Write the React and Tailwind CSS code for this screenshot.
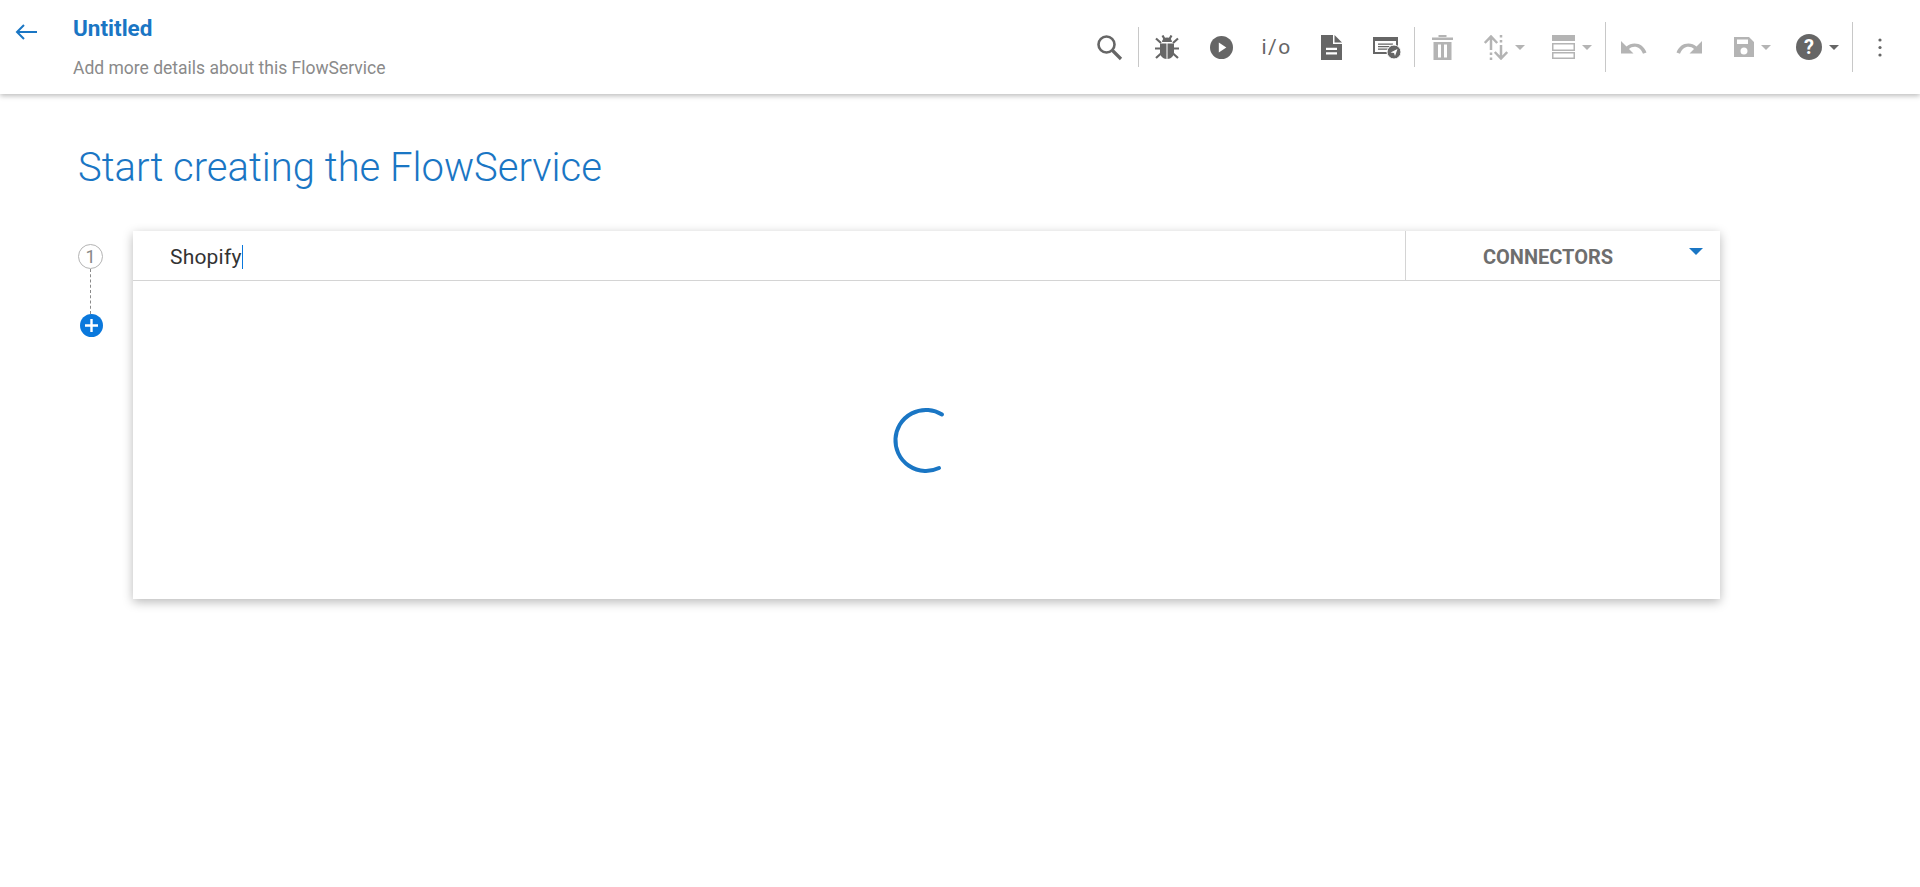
import React from "react";

const Caret = ({ color = "#b4b4b4" }) => (
  <svg width="10" height="5" viewBox="0 0 10 5" className="ml-[7px] shrink-0"><path d="M0 0h10L5 5z" fill={color} /></svg>
);
const Sep = ({ tall }) => (
  <div className={tall ? "w-px h-[50px] bg-[#c8c8c8] shrink-0" : "w-px h-10 bg-[#c8c8c8] shrink-0"} />
);
const Item = ({ className = "w-[55px]", children }) => (
  <div className={`${className} h-full flex items-center justify-center shrink-0`}>{children}</div>
);

const D = "#666666";
const L = "#b4b4b4";

export default function App() {
  return (
    <div className="min-h-[887px] bg-white [font-family:Roboto,'Liberation_Sans',sans-serif]">
      <header className="h-[94px] flex bg-white shadow-[0_2px_5px_rgba(0,0,0,0.26)] relative">
        <div className="w-[73px] shrink-0 pl-[15px] pt-[24px]">
          <svg width="22" height="16" viewBox="0 0 22 16" fill="none" stroke="#1a76c4" strokeWidth="2">
            <path d="M22 8H2M9 1L2 8l7 7" />
          </svg>
        </div>
        <div className="flex flex-col pt-[14px]">
          <div className="text-[22.5px] leading-[28px] font-bold text-[#1a76c4]">Untitled</div>
          <div className="mt-[14px] text-[17.5px] leading-[24px] text-[#8a8a8a]">Add more details about this FlowService</div>
        </div>
        <div className="ml-auto flex items-center pr-[13px]">
          <Item className="w-[58px]">
            <svg width="28" height="28" viewBox="0 0 28 28" fill="none" stroke={D} strokeWidth="2.6">
              <circle cx="11.5" cy="11.5" r="8" /><path d="M17.5 17.5l8.5 8.5" strokeWidth="3.2" />
            </svg>
          </Item>
          <Sep />
          <Item>
            <svg width="24" height="24" viewBox="0 0 24 24">
              <path d="M7.500 .5l2 3.500M16.500 .5l-2 3.500M1 3.500l5 4.500M23 3.500l-5 4.500M0 13.500h6M24 13.500h-6M1 23l5-4.500M23 23l-5-4.500" stroke={D} strokeWidth="2.200" fill="none" />
              <path d="M7 7a5 4.500 0 0 1 10 0z" fill={D} />
              <path d="M5 8.500h6.500V24C8 24 5 21 5 17.500zM12.500 8.500H19v9c0 3.500-3 6.500-6.500 6.500z" fill={D} />
            </svg>
          </Item>
          <Item>
            <svg width="23" height="23" viewBox="0 0 23 23"><circle cx="11.5" cy="11.5" r="11.5" fill={D} /><path d="M8.8 6.5v10l7.5-5z" fill="#fff" /></svg>
          </Item>
          <Item><span className="text-[21px] tracking-[1.5px] text-[#666666] leading-none">i/o</span></Item>
          <Item>
            <svg width="21" height="25" viewBox="0 0 21 25">
              <path d="M0 0h12v9h9v16H0z" fill={D} /><path d="M13.500 0L21 7.500h-7.500z" fill={D} />
              <path d="M5 12.700h11v2.300H5zM5 17.200h11v2.300H5z" fill="#fff" />
            </svg>
          </Item>
          <Item>
            <svg width="28" height="23" viewBox="0 0 28 23">
              <path d="M0 1h25v17H0z" fill={D} /><path d="M2 5h21v11H2z" fill="#fff" />
              <path d="M5 7.5h15v1.3H5zM5 10h13v1.3H5zM5 12.500h10v1.300H5z" fill={D} />
              <circle cx="21" cy="16" r="7" fill={D} stroke="#fff" strokeWidth="1" />
              <path d="M17.500 16.500l7-3.500-2.500 7-1-3z" fill="#fff" />
            </svg>
          </Item>
          <Sep />
          <Item>
            <svg width="21" height="25" viewBox="0 0 21 25" fill={L}>
              <path d="M0 2.500h21v2.500H0zM6.500 0h8v2H6.500z" /><path fillRule="evenodd" d="M1.500 7h18v18h-18zM6 9.500h3v13H6zM12 9.500h3v13h-3z" />
            </svg>
          </Item>
          <Item className="w-[68px]">
            <svg width="24" height="25" viewBox="0 0 24 25" fill="none" stroke={L} strokeWidth="2.500">
              <path d="M7 15V1.500M.8 8L7 1.500 13.200 8" />
              <path d="M7 17.500v2.500M7 22.500v2.500" />
              <path d="M17 10v13.500M10.800 17l6.200 6.500 6.200-6.500" />
              <path d="M17 0v2.500M17 5v2.500" />
            </svg>
            <Caret />
          </Item>
          <Item className="w-[67px]">
            <svg width="23" height="24" viewBox="0 0 23 24">
              <path d="M0 0h23v6H0z" fill={L} />
              <path d="M.75 8.750h21.500v6.500H.75zM.75 17.750h21.500v5.500H.75z" fill="none" stroke={L} strokeWidth="1.500" />
            </svg>
            <Caret />
          </Item>
          <Sep tall />
          <Item>
            <svg width="26" height="13" viewBox="0 0 26 13"><path d="M0 0v12.500h12.500L8 8c1.500-1.300 3.500-2.200 5.500-2.200 3.600 0 6.800 2.400 8.500 7l3.500-1.200C23.400 5.800 19 2.500 13.500 2.500 10.500 2.500 7.700 3.500 5.500 5.500z" fill={L} /></svg>
          </Item>
          <Item className="w-[56px]">
            <svg width="26" height="13" viewBox="0 0 26 13"><path d="M26 0v12.500H13.500L18 8c-1.500-1.300-3.500-2.200-5.500-2.200-3.600 0-6.800 2.400-8.500 7L.5 11.600C2.600 5.800 7 2.500 12.500 2.500c3 0 5.800 1 8 3z" fill={L} /></svg>
          </Item>
          <Item className="w-[70px]">
            <svg width="20" height="20" viewBox="0 0 20 20">
              <path fillRule="evenodd" d="M0 0h15l5 5v15H0zM3 2.500v4.500h11V2.500zM10 10.500a3.500 3.500 0 1 0 0 7 3.500 3.500 0 0 0 0-7z" fill={L} />
            </svg>
            <Caret />
          </Item>
          <Item className="w-[65px] pr-[5px]">
            <svg width="26" height="26" viewBox="0 0 26 26">
              <circle cx="13" cy="13" r="13" fill={D} />
              <text x="13" y="20" textAnchor="middle" fontSize="20" fontWeight="700" fontFamily="Roboto" fill="#fff">?</text>
            </svg>
            <Caret color={D} />
          </Item>
          <Sep tall />
          <Item className="w-[54px]">
            <svg width="4" height="19" viewBox="0 0 4 19" fill={D}><circle cx="2" cy="2" r="1.600" /><circle cx="2" cy="9.500" r="1.600" /><circle cx="2" cy="17" r="1.600" /></svg>
          </Item>
        </div>
      </header>

      <main className="pl-[78px] pr-[200px]">
        <h1 className="pt-[51px] text-[40px] leading-[46px] font-light text-[#1a76c4]">Start creating the FlowService</h1>
        <div className="mt-[40px] flex">
          <div className="w-[55px] shrink-0 pt-[13px] flex flex-col">
            <div className="w-[25px] h-[25px] rounded-full border border-[#b4b4b4] flex items-center justify-center text-[18px] text-[#888888]">1</div>
            <div className="ml-3 h-[45px] w-0 border-l border-dashed border-[#8a8a8a]" />
            <div className="ml-[2px] w-[23px] h-[23px] rounded-full bg-[#0a78dc] flex items-center justify-center">
              <svg width="13" height="13" viewBox="0 0 13 13" stroke="#fff" strokeWidth="2.400"><path d="M6.500 0v13M0 6.500h13" /></svg>
            </div>
          </div>
          <section className="w-[1587px] h-[368px] bg-white shadow-[0_3px_10px_rgba(0,0,0,0.28)] flex flex-col">
            <div className="h-[50px] flex border-b border-[#d4d4d4] shrink-0">
              <div className="flex-1 pl-[37px] pt-[2px] flex items-center">
                <span className="text-[21px] tracking-[0.2px] text-[#333333] leading-6">Shopify</span>
                <span className="w-px h-6 bg-[#0a78dc]" />
              </div>
              <div className="w-[315px] pt-[2px] pr-[30px] border-l border-[#d4d4d4] flex items-center justify-center relative">
                <span className="text-[20px] font-bold text-[#6e6e6e]">CONNECTORS</span>
                <svg width="14" height="7" viewBox="0 0 14 7" className="absolute right-[17px] top-[17px]"><path d="M0 0h14L7 7z" fill="#1a76c4" /></svg>
              </div>
            </div>
            <div className="flex-1 flex items-center justify-center">
              <svg width="70" height="70" viewBox="0 0 70 70" fill="none" stroke="#1a76c4" strokeWidth="4" strokeLinecap="round">
                <path d="M50 9.500A30.500 30.500 0 1 0 47 63" />
              </svg>
            </div>
          </section>
        </div>
      </main>
    </div>
  );
}
